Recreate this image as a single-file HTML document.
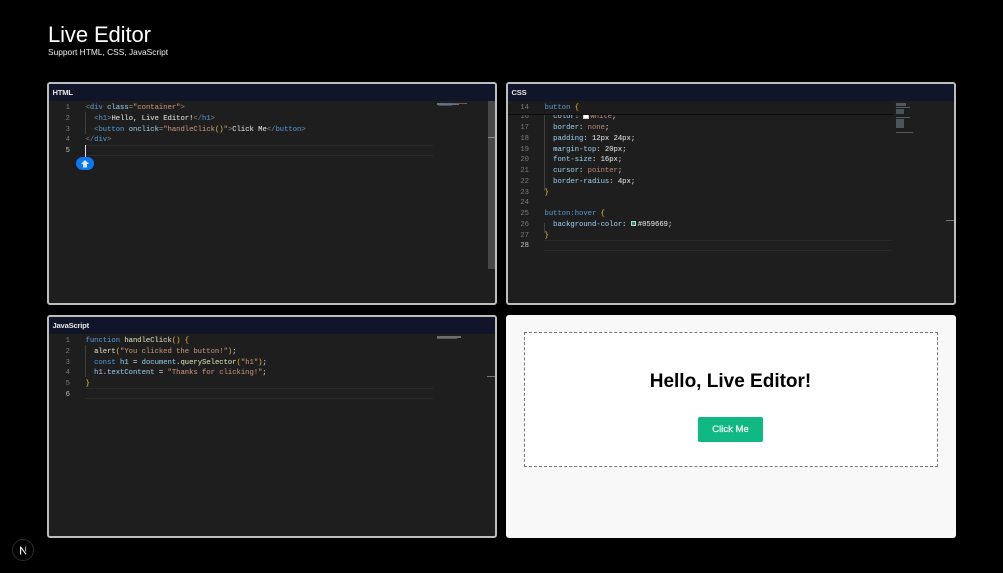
<!DOCTYPE html>
<html><head><meta charset="utf-8"><style>
html,body{margin:0;padding:0;background:#000;width:1003px;height:573px;overflow:hidden;font-family:"Liberation Sans",sans-serif}
#w{position:absolute;left:0;top:0;width:1003px;height:573px;overflow:hidden;background:#000;filter:blur(.35px)}
.a{position:absolute}
.p{position:absolute;box-sizing:border-box;width:450px;height:223px;background:#1e1e1e;border:2px solid #bdbdbd;border-radius:3px;overflow:hidden}
.hd{position:absolute;left:0;top:0;right:0;height:17px;background:#11152a;color:#e6e6e6;font-size:7.6px;font-weight:bold;line-height:17px;padding-left:3.5px;letter-spacing:-.2px}
.c{position:absolute;font:7.2px/10.75px "Liberation Mono",monospace;color:#c4c4c4;white-space:pre;-webkit-text-stroke:.12px currentColor}
.n{position:absolute;font:7.2px/10.75px "Liberation Mono",monospace;color:#7a7a7a;text-align:right;white-space:pre;width:20px}
.n b{color:#c0c0c0;font-weight:normal}
.t{color:#4f8cc4}.g{color:#777}.v{color:#b98a72}.k{color:#8fbcd8}.y{color:#c9a93c}.f{color:#cfcfb0}.w{color:#d4d4d4}.r{color:#a87f76}
.lh{position:absolute;height:9px;border:1px solid #2a2a2a;border-left:0;border-right:0}
.gd{position:absolute;width:1px;background:#404040}
.sw{display:inline-block;width:5.5px;height:5.5px;border:.5px solid #ccc;box-sizing:border-box;margin-right:1.5px;vertical-align:-0.5px}
.mm{position:absolute;height:1px;opacity:.65}
</style></head><body><div id="w">
<div class="a" style="left:48px;top:21px;color:#fff;font-size:22px;line-height:28px;letter-spacing:-.1px">Live Editor</div>
<div class="a" style="left:48px;top:46px;color:#eee;font-size:8.4px;line-height:12px">Support HTML, CSS, JavaScript</div>

<!-- HTML -->
<div class="p" style="left:47px;top:82px">
<div class="hd">HTML</div>
<div class="lh" style="left:36px;top:61px;width:348px"></div>
<div class="gd" style="left:36px;top:28px;height:22px"></div>
<div class="n" style="left:1px;top:19px">1
2
3
4
<b>5</b></div>
<div class="c" style="left:36.5px;top:19px"><span class="g">&lt;</span><span class="t">div</span> <span class="k">class</span><span class="g">=</span><span class="v">"container"</span><span class="g">&gt;</span>
  <span class="g">&lt;</span><span class="t">h1</span><span class="g">&gt;</span><span class="w">Hello, Live Editor!</span><span class="g">&lt;/</span><span class="t">h1</span><span class="g">&gt;</span>
  <span class="g">&lt;</span><span class="t">button</span> <span class="k">onclick</span><span class="g">=</span><span class="v">"handleClick</span><span class="y">()</span><span class="v">"</span><span class="g">&gt;</span><span class="w">Click Me</span><span class="g">&lt;/</span><span class="t">button</span><span class="g">&gt;</span>
<span class="g">&lt;/</span><span class="t">div</span><span class="g">&gt;</span></div>
<div class="a" style="left:36px;top:61px;width:1px;height:12px;background:#ddd"></div>
<div class="a" style="left:439px;top:17px;width:9px;height:168px;background:#484848"></div>
<div class="a" style="left:439px;top:53px;width:9px;height:1px;background:#8a8a8a"></div>
<div class="mm" style="left:388px;top:19px;width:30px;background:linear-gradient(90deg,#8aa0b8,#7a8aa8 55%,#a06a60 70%,#888)"></div>
<div class="mm" style="left:388px;top:20px;width:22px;background:#8fa0b8"></div>
<div class="mm" style="left:389px;top:21px;width:14px;background:#667"></div>
</div>
<div class="a" style="left:76px;top:157px;width:18px;height:13px;border-radius:7px;background:#0a78f0"></div>
<svg class="a" style="left:80px;top:158.5px" width="10" height="10" viewBox="0 0 10 10"><path d="M5 1 L9 5 H7 V8.5 H3 V5 H1 Z" fill="#d8e8ff"/></svg>

<!-- CSS -->
<div class="p" style="left:506px;top:82px">
<div class="hd">CSS</div>
<div class="a" style="left:0;top:17px;width:385px;height:14px;background:#1c1c1c;border-bottom:1px solid #0c0c0c;box-sizing:border-box;z-index:2"></div>
<div class="n" style="left:1px;top:19px;z-index:3">14</div>
<div class="c" style="left:36.5px;top:19px;z-index:3"><span class="t">button</span> <span class="y">{</span></div>
<div class="lh" style="left:36px;top:156px;width:348px"></div>
<div class="gd" style="left:36px;top:31px;height:76px"></div>
<div class="gd" style="left:36px;top:139px;height:10px"></div>
<div class="n" style="left:1px;top:28.25px">16
17
18
19
20
21
22
23
24
25
26
27
<b>28</b></div>
<div class="c" style="left:36.5px;top:28.25px">  <span class="k">color</span>: <span class="sw" style="background:#fff"></span><span class="r">white</span>;
  <span class="k">border</span>: <span class="r">none</span>;
  <span class="k">padding</span>: <span class="w">12px 24px</span>;
  <span class="k">margin-top</span>: <span class="w">20px</span>;
  <span class="k">font-size</span>: <span class="w">16px</span>;
  <span class="k">cursor</span>: <span class="r">pointer</span>;
  <span class="k">border-radius</span>: <span class="w">4px</span>;
<span class="y">}</span>

<span class="t">button:hover</span> <span class="y">{</span>
  <span class="k">background-color</span>: <span class="sw" style="background:#059669"></span><span class="w">#059669</span>;
<span class="y">}</span></div>
<div class="a" style="left:438px;top:136px;width:10px;height:1px;background:#777"></div>
<div class="mm" style="left:388px;top:19px;width:10px;height:3px;background:#7f93a0;opacity:.5;z-index:4"></div>
<div class="mm" style="left:388px;top:23px;width:14px;background:#8899a8;opacity:.5;z-index:4"></div>
<div class="mm" style="left:388px;top:25px;width:8px;height:5px;background:#6f8a90;opacity:.5;z-index:4"></div>
<div class="mm" style="left:388px;top:33px;width:14px;background:#8899a8;opacity:.5"></div>
<div class="mm" style="left:388px;top:35px;width:8px;height:9px;background:#6f8f95;opacity:.5"></div>
<div class="mm" style="left:388px;top:48px;width:17px;background:#8899a8;opacity:.5"></div>
</div>

<!-- JS -->
<div class="p" style="left:47px;top:315px">
<div class="hd">JavaScript</div>
<div class="lh" style="left:36px;top:71px;width:348px"></div>
<div class="gd" style="left:36px;top:28px;height:32px"></div>
<div class="n" style="left:1px;top:19px">1
2
3
4
5
<b>6</b></div>
<div class="c" style="left:36.5px;top:19px"><span class="t">function</span> <span class="f">handleClick</span><span class="y">()</span> <span class="y">{</span>
  <span class="f">alert</span><span class="y">(</span><span class="v">"You clicked the button!"</span><span class="y">)</span>;
  <span class="t">const</span> <span class="k">h1</span> = <span class="k">document</span>.<span class="f">querySelector</span><span class="y">(</span><span class="v">"h1"</span><span class="y">)</span>;
  <span class="k">h1</span>.<span class="k">textContent</span> = <span class="v">"Thanks for clicking!"</span>;
<span class="y">}</span></div>
<div class="a" style="left:438px;top:59px;width:10px;height:1px;background:#777"></div>
<div class="mm" style="left:388px;top:19px;width:24px;height:2px;background:#9a9a9a"></div>
<div class="mm" style="left:388px;top:21px;width:20px;background:#777"></div>
</div>

<!-- Preview -->
<div class="a" style="left:506px;top:315px;width:449.5px;height:222.5px;background:#f8f8f8;border-radius:3px"></div>
<div class="a" style="left:524px;top:332px;width:414px;height:135px;box-sizing:border-box;background:#fff;border:1px dashed #777"></div>
<div class="a" style="left:524px;top:370px;width:413px;text-align:center;font-size:19px;line-height:24px;font-weight:bold;color:#000">Hello, Live Editor!</div>
<div class="a" style="left:698px;top:417px;width:65px;height:25px;background:#10b981;border-radius:2px;color:#f4fff9;font-size:9.6px;line-height:25px;text-align:center;-webkit-text-stroke:.2px #f4fff9">Click Me</div>

<!-- Next badge -->
<div class="a" style="left:12px;top:539px;width:22px;height:22px;box-sizing:border-box;border-radius:50%;background:#000;border:1px solid #2c2c2c"></div>
<svg class="a" style="left:12px;top:539px" width="22" height="22" viewBox="0 0 22 22"><path d="M8 15.5 V7.5 H9 L14.5 15 L13.6 15.6 L9.2 9.6 V15.5 Z" fill="#eee"/><path d="M13 7.5 H14.2 V12.5 H13 Z" fill="#999"/></svg>
</div></body></html>
